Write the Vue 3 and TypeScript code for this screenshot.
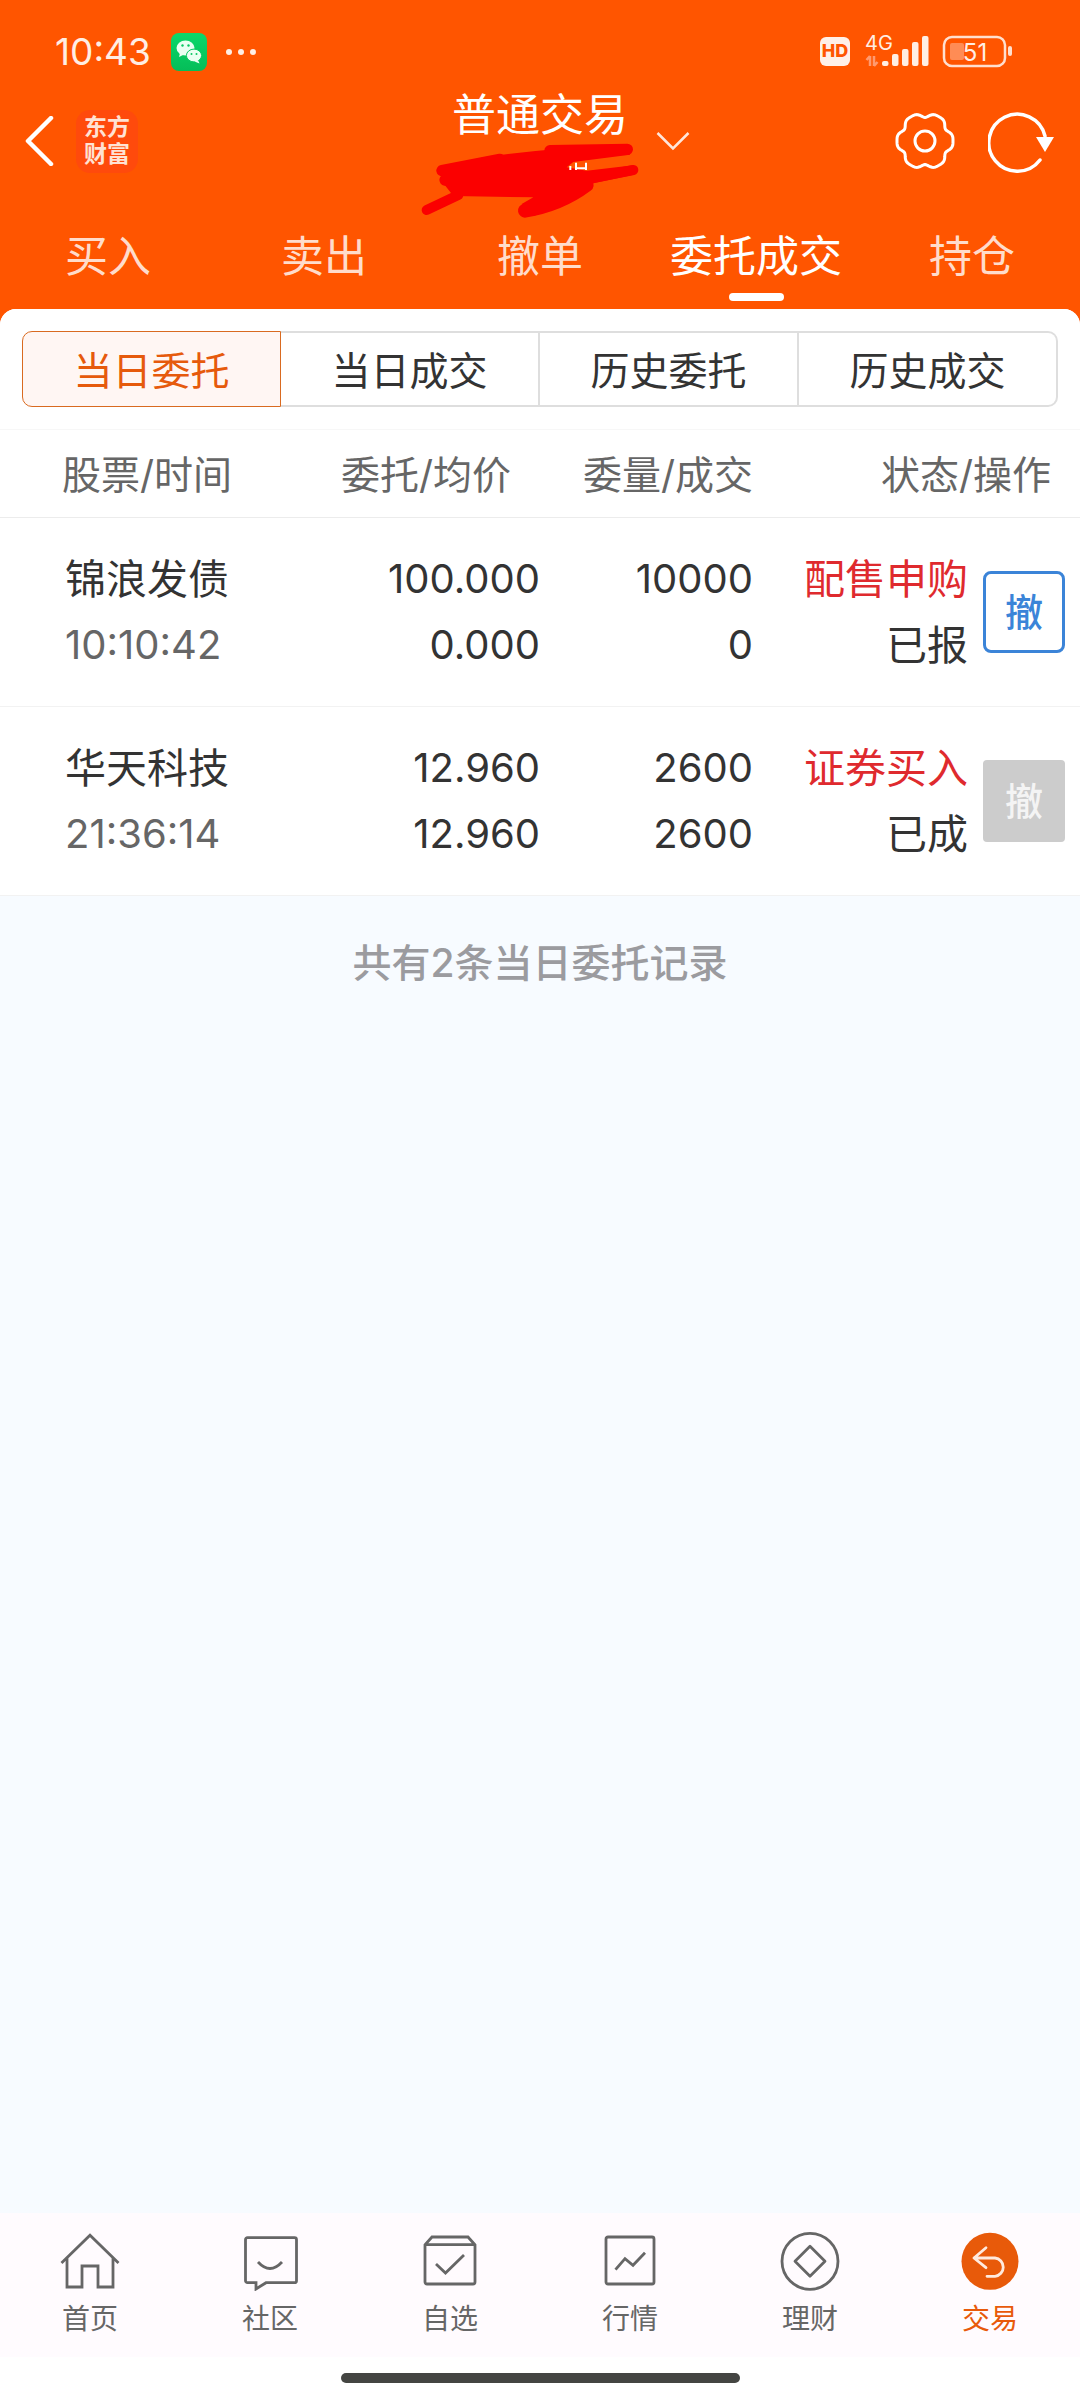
<script setup lang="ts">
interface Order {
  name: string;
  time: string;
  price: string;
  avg: string;
  qty: string;
  filled: string;
  kind: string;
  status: string;
  canCancel: boolean;
}

const tabs = ['买入', '卖出', '撤单', '委托成交', '持仓'];
const subTabs = ['当日委托', '当日成交', '历史委托', '历史成交'];

const orders: Order[] = [
  { name: '锦浪发债', time: '10:10:42', price: '100.000', avg: '0.000', qty: '10000', filled: '0', kind: '配售申购', status: '已报', canCancel: true },
  { name: '华天科技', time: '21:36:14', price: '12.960', avg: '12.960', qty: '2600', filled: '2600', kind: '证券买入', status: '已成', canCancel: false },
];

// wavy outline of the settings gear, six lobes
const gearPath = (() => {
  const pts: string[] = [];
  for (let i = 0; i < 120; i++) {
    const t = (i / 120) * Math.PI * 2;
    const r = 26.5 + 2.2 * Math.cos(6 * t) - 0.7 * Math.cos(12 * t);
    pts.push(`${(30 + r * Math.cos(t)).toFixed(2)} ${(30 + r * Math.sin(t)).toFixed(2)}`);
  }
  return `M${pts.join('L')}Z`;
})();
</script>

<template>
  <div class="page">
    <header class="top">
      <div class="status">
        <span class="clock">10:43</span>
        <svg class="wechat" viewBox="0 0 36 38" width="36" height="38">
          <defs>
            <linearGradient id="wx" x1="0" y1="0" x2="0" y2="1">
              <stop offset="0" stop-color="#0bd86a" />
              <stop offset="1" stop-color="#05bd58" />
            </linearGradient>
          </defs>
          <rect width="36" height="38" rx="8" fill="url(#wx)" />
          <ellipse cx="14.5" cy="15" rx="9" ry="7.5" fill="#eafff2" />
          <path d="M9 20l-1 4 5-2.5z" fill="#eafff2" />
          <ellipse cx="23" cy="22.5" rx="7.6" ry="6.4" fill="#eafff2" stroke="#08c862" stroke-width="1" />
          <path d="M27 27l1.500 3.500-5-2z" fill="#eafff2" />
          <circle cx="11.500" cy="12.500" r="1.200" fill="#08c862" />
          <circle cx="17.500" cy="12.500" r="1.200" fill="#08c862" />
          <circle cx="20.500" cy="21" r="1" fill="#08c862" />
          <circle cx="25.500" cy="21" r="1" fill="#08c862" />
        </svg>
        <span class="dots"><i></i><i></i><i></i></span>
        <svg class="sys" viewBox="0 0 192 36" width="192" height="36">
          <rect x="0" y="3" width="30" height="29" rx="6" fill="#fff0e8" />
          <text x="15" y="23" class="hd">HD</text>
          <text x="45" y="16" class="net">4G</text>
          <path d="M50 22v10M46.500 26l3.500-4M54 32V22M57.500 28L54 32" stroke="#ff9a70" stroke-width="2.500" fill="none" />
          <rect x="62" y="27" width="6.500" height="5" rx="2" fill="#ffeee4" />
          <rect x="72" y="20" width="6.500" height="12" rx="2" fill="#ffeee4" />
          <rect x="82" y="15" width="6.500" height="17" rx="2" fill="#ffeee4" />
          <rect x="92" y="8" width="6.500" height="24" rx="2" fill="#ffeee4" />
          <rect x="102" y="2" width="6.500" height="30" rx="2" fill="#ffeee4" />
          <rect x="124" y="3" width="61" height="29" rx="8" fill="none" stroke="#ffdfcf" stroke-width="2.500" />
          <rect x="130" y="9" width="14" height="17" rx="2" fill="#ff8c55" />
          <text x="155" y="27" class="batt">51</text>
          <rect x="188" y="12" width="4" height="10" rx="2" fill="#ffdfcf" />
        </svg>
      </div>

      <div class="nav">
        <div class="nav-left">
          <svg class="back" viewBox="0 0 30 50" width="30" height="50">
            <path d="M27 2L4 25l23 23" fill="none" stroke="#fff" stroke-width="4.500" stroke-linecap="round" stroke-linejoin="round" />
          </svg>
          <div class="logo"><span>东方</span><span>财富</span></div>
        </div>
        <div class="title">普通交易</div>
        <div class="nav-right">
          <svg class="caret" viewBox="0 0 34 20" width="34" height="20">
            <path d="M1.500 2L17 17.500 32.500 2" fill="none" stroke="#ffe6da" stroke-width="2.500" />
          </svg>
          <svg class="gear" viewBox="0 0 60 60" width="60" height="60">
            <path :d="gearPath" fill="none" stroke="#fff" stroke-width="3" stroke-linejoin="round" />
            <circle cx="30" cy="30" r="10" fill="none" stroke="#fff" stroke-width="3" />
          </svg>
          <svg class="reload" viewBox="0 0 68 64" width="68" height="64">
            <path d="M57 27A28.500 28.500 0 1 0 52 51" fill="none" stroke="#fff" stroke-width="3.500" stroke-linecap="round" />
            <path d="M48 28h18l-9 15z" fill="#fff" />
          </svg>
        </div>
      </div>

      <nav class="tabs">
        <div v-for="(t, i) in tabs" :key="t" class="tab" :class="{ on: i === 3 }">
          <span>{{ t }}</span>
          <i class="bar"></i>
        </div>
      </nav>

      <svg class="scribble" viewBox="0 0 900 450" width="300" height="150">
        <path d="M250 232Q440 205 680 192L690 224L520 246L500 262L560 272L700 256L702 284L570 312Q520 370 400 408L365 372L400 352L160 348L130 310L115 268z" fill="#fb0000" />
        <g fill="none" stroke="#fb0000" stroke-linecap="round">
          <path d="M126 272L300 238" stroke-width="34" />
          <path d="M135 300L300 320" stroke-width="34" />
          <path d="M80 390L175 345" stroke-width="30" />
          <path d="M450 212L682 208" stroke-width="34" />
          <path d="M570 296L700 270" stroke-width="30" />
          <path d="M375 392Q480 375 560 315" stroke-width="42" />
        </g>
        <path d="M508 258h6v12h-6zM525 248h6v22h-6zM555 248h6v22h-6zM525 262h36v6h-36z" fill="#fff" />
      </svg>
    </header>

    <main class="panel">
      <div class="sub-tabs">
        <div v-for="(s, i) in subTabs" :key="s" class="sub" :class="{ on: i === 0 }">{{ s }}</div>
      </div>

      <div class="thead">
        <span class="h-first">股票/时间</span>
        <span>委托/均价</span>
        <span>委量/成交</span>
        <span>状态/操作</span>
      </div>

      <div v-for="o in orders" :key="o.name" class="row">
        <div class="cell name">
          <span>{{ o.name }}</span>
          <span class="muted">{{ o.time }}</span>
        </div>
        <div class="cell num digits">
          <span>{{ o.price }}</span>
          <span>{{ o.avg }}</span>
        </div>
        <div class="cell num digits">
          <span>{{ o.qty }}</span>
          <span>{{ o.filled }}</span>
        </div>
        <div class="cell num">
          <span class="red">{{ o.kind }}</span>
          <span>{{ o.status }}</span>
        </div>
        <div class="cancel" :class="{ off: !o.canCancel }">撤</div>
      </div>

      <div class="summary">共有2条当日委托记录</div>
    </main>

    <footer class="bottom">
      <div class="item">
        <svg viewBox="0 0 60 60" width="60" height="60" class="ico">
          <path d="M1.500 32L30 4.300 58.500 32M7 27v29h15V35h16v21h15V27" />
        </svg>
        <span>首页</span>
      </div>
      <div class="item">
        <svg viewBox="0 0 60 60" width="60" height="60" class="ico">
          <path d="M7.500 6.700h47a2 2 0 0 1 2 2v41a2 2 0 0 1-2 2H26L16 58v-6.300H7.500a2 2 0 0 1-2-2v-41a2 2 0 0 1 2-2z" />
          <path d="M18 31q12 13 24 0" />
        </svg>
        <span>社区</span>
      </div>
      <div class="item">
        <svg viewBox="0 0 60 60" width="60" height="60" class="ico">
          <path d="M12 6h36l7 7.700V51a2 2 0 0 1-2 2H7a2 2 0 0 1-2-2V13.700zM5 13.700h50" />
          <path d="M16 33l9.500 9L44 24" />
        </svg>
        <span>自选</span>
      </div>
      <div class="item">
        <svg viewBox="0 0 60 60" width="60" height="60" class="ico">
          <rect x="6" y="6" width="48" height="47" rx="2" />
          <path d="M15.500 38.700L25 27.700l8 6.600 12-12.600" />
        </svg>
        <span>行情</span>
      </div>
      <div class="item">
        <svg viewBox="0 0 60 60" width="60" height="60" class="ico">
          <circle cx="30" cy="30.300" r="28" />
          <path d="M30 15.300L45 30.300 30 45.300 15 30.300z" stroke-linejoin="round" />
        </svg>
        <span>理财</span>
      </div>
      <div class="item on">
        <svg viewBox="0 0 60 60" width="60" height="60">
          <circle cx="30" cy="30.300" r="28.500" fill="#e85a0a" />
          <path d="M26 16.700L14 27l12 9.700M14 27h21a9.200 9.200 0 0 1 0 18.300h-8" fill="none" stroke="#ffeade" stroke-width="2.800" stroke-linecap="round" stroke-linejoin="round" />
        </svg>
        <span>交易</span>
      </div>
    </footer>

    <div class="home-strip"><i></i></div>
  </div>
</template>

<style scoped>
.page {
  position: relative;
  width: 1080px;
  height: 2400px;
  display: flex;
  flex-direction: column;
  background: #fff;
  color: #333;
  font-family: Inter, "Noto Sans CJK SC", sans-serif;
  overflow: hidden;
}

.top {
  position: relative;
  background: #ff5500;
  height: 325px;
  flex: none;
}

.status {
  display: flex;
  align-items: center;
  height: 36px;
  padding: 34px 68px 20px 55px;
}

.clock {
  font-size: 37px;
  color: #ffeee4;
  line-height: 36px;
}

.wechat {
  margin-left: 20px;
}

.dots {
  display: flex;
  gap: 6px;
  margin-left: 19px;
}

.dots i {
  width: 6px;
  height: 6px;
  border-radius: 50%;
  background: #ffeee4;
}

.sys {
  margin-left: auto;
}

.hd {
  font: 800 18px Inter, sans-serif;
  fill: #ff5500;
  text-anchor: middle;
}

.net {
  font: 400 20px Inter, sans-serif;
  fill: #ffeee4;
}

.batt {
  font: 400 24px Inter, sans-serif;
  fill: #ffeee4;
  text-anchor: middle;
}

.nav {
  display: grid;
  grid-template-columns: 1fr auto 1fr;
  height: 102px;
}

.nav-left {
  display: flex;
  align-items: center;
  padding-left: 24px;
}

.logo {
  width: 62px;
  height: 63px;
  margin-left: 22px;
  border-radius: 14px;
  background: #ff4a0c;
  color: #ffe2d4;
  font-size: 23px;
  font-weight: 700;
  line-height: 27px;
  display: flex;
  flex-direction: column;
  align-items: center;
  justify-content: center;
}

.title {
  font-size: 44px;
  line-height: 54px;
  color: #fff;
  margin-top: -2px;
}

.nav-right {
  display: flex;
  align-items: center;
  padding-right: 24px;
}

.caret {
  margin-left: 28px;
  margin-right: auto;
}

.reload {
  margin-left: 33px;
}

.tabs {
  display: grid;
  grid-template-columns: repeat(5, 1fr);
  padding-top: 42px;
}

.tab {
  display: flex;
  flex-direction: column;
  align-items: center;
  font-size: 43px;
  line-height: 44px;
  color: #ffdccb;
}

.tab.on {
  color: #fff;
}

.bar {
  width: 55px;
  height: 8px;
  margin-top: 15px;
  border-radius: 4px;
}

.tab.on .bar {
  background: #fff;
}

/* covered account name in the screenshot */
.scribble {
  position: absolute;
  left: 400px;
  top: 80px;
}

.panel {
  position: relative;
  flex: 1;
  margin-top: -16px;
  border-radius: 16px 16px 0 0;
  background: #f7fbff;
  overflow: hidden;
}

.sub-tabs {
  display: grid;
  grid-template-columns: repeat(4, 1fr);
  padding: 22px 22px 22px;
  background: #fff;
}

.sub {
  height: 76px;
  box-sizing: border-box;
  display: flex;
  align-items: center;
  justify-content: center;
  border: 2px solid #dedede;
  border-left-width: 0;
  font-size: 39px;
  color: #333;
  padding-bottom: 2px;
}

.sub:last-child {
  border-radius: 0 10px 10px 0;
}

.sub.on {
  border: 1px solid #d96a20;
  border-radius: 10px 0 0 10px;
  background: #fff6f3;
  color: #e65a0c;
}

.thead {
  display: grid;
  grid-template-columns: 202px 247px 242px 298px;
  box-sizing: border-box;
  height: 89px;
  align-items: center;
  padding: 0 0 4px 62px;
  border-top: 1px solid #f7f7f7;
  border-bottom: 1px solid #ececec;
  background: #fff;
  font-size: 39px;
  color: #666;
  text-align: right;
  white-space: nowrap;
}

.h-first {
  text-align: left;
}

.row {
  display: grid;
  grid-template-columns: 275px 200px 213px 215px 82px;
  box-sizing: border-box;
  height: 189px;
  padding: 28px 0 0 65px;
  background: #fff;
  border-bottom: 1px solid #f2f2f2;
  font-size: 41px;
}

.row:last-of-type {
  border-bottom: 0;
}

.cell {
  display: flex;
  flex-direction: column;
}

.cell span {
  line-height: 66px;
  white-space: nowrap;
}

.digits {
  font-size: 40px;
}

.num {
  text-align: right;
}

.muted {
  color: #666;
  font-size: 40px;
}

.red {
  color: #df2a2e;
}

.cancel {
  box-sizing: border-box;
  width: 82px;
  height: 82px;
  margin: 25px 0 0 15px;
  padding-bottom: 5px;
  display: flex;
  align-items: center;
  justify-content: center;
  border: 3px solid #3b84d8;
  border-radius: 8px;
  color: #3b84d8;
  font-size: 38px;
  font-weight: 500;
}

.cancel.off {
  border: 0;
  border-radius: 4px;
  background: #cccccc;
  color: #f4f4f4;
}

.summary {
  margin-top: 45px;
  text-align: center;
  font-size: 39px;
  line-height: 44px;
  font-weight: 500;
  color: #9b9b9f;
}

.bottom {
  flex: none;
  display: grid;
  grid-template-columns: repeat(6, 1fr);
  height: 144px;
  background: #fffbfe;
}

.item {
  display: flex;
  flex-direction: column;
  align-items: center;
  padding-top: 18px;
  font-size: 28px;
  line-height: 34px;
  color: #666;
}

.item span {
  margin-top: 11px;
}

.item.on {
  color: #e85a0a;
}

.ico {
  fill: none;
  stroke: #666;
  stroke-width: 2.800;
}

.home-strip {
  flex: none;
  height: 43px;
  display: flex;
  justify-content: center;
  padding-top: 16px;
  box-sizing: border-box;
}

.home-strip i {
  width: 399px;
  height: 10px;
  border-radius: 5px;
  background: #444542;
}
</style>
